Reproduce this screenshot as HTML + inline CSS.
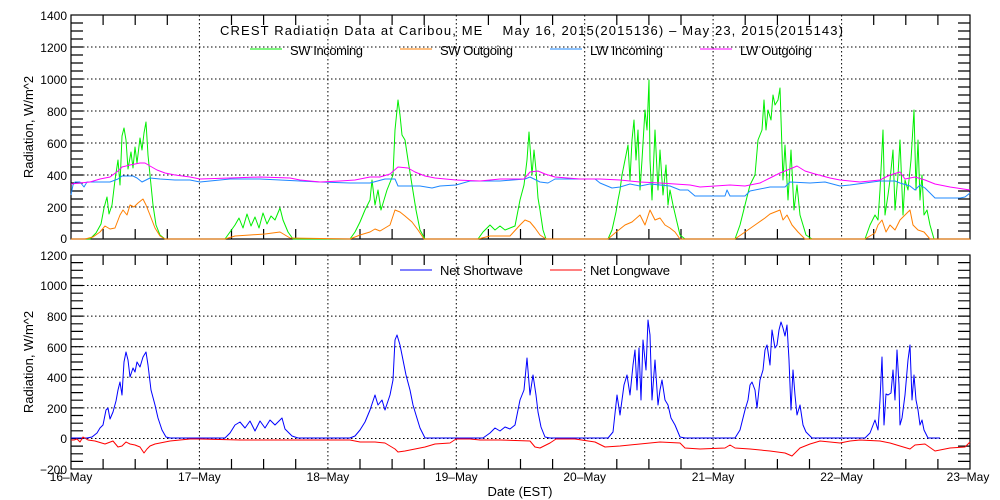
<!DOCTYPE html>
<html><head><meta charset="utf-8"><style>
html,body{margin:0;padding:0;background:#fff;}
svg{display:block;font-family:"Liberation Sans",sans-serif;}
</style></head><body>
<svg width="1000" height="500" xmlns="http://www.w3.org/2000/svg">
<rect width="1000" height="500" fill="#fff"/>
<g stroke="#000" stroke-width="1" fill="none" stroke-dasharray="1.5 2.5">
<path d="M71 207H970M71 175H970M71 143H970M71 111H970M71 79H970M71 47H970"/>
<path d="M71 438.5H970M71 407.9H970M71 377.3H970M71 346.7H970M71 316.1H970M71 285.5H970"/>
<path d="M199.4 15V239M327.9 15V239M456.3 15V239M584.7 15V239M713.1 15V239M841.6 15V239"/>
<path d="M199.4 255V469M327.9 255V469M456.3 255V469M584.7 255V469M713.1 255V469M841.6 255V469"/>
</g>
<g stroke="#000" stroke-width="1.2" fill="none">
<rect x="71" y="15" width="899" height="224"/>
<rect x="71" y="255" width="899" height="214"/>
<path d="M71 23h12M71 31h12M71 39h12M71 47h12M71 55h12M71 63h12M71 71h12M71 79h12M71 87h12M71 95h12M71 103h12M71 111h12M71 119h12M71 127h12M71 135h12M71 143h12M71 151h12M71 159h12M71 167h12M71 175h12M71 183h12M71 191h12M71 199h12M71 207h12M71 215h12M71 223h12M71 231h12"/>
<path d="M958 23h12M958 31h12M958 39h12M958 47h12M958 55h12M958 63h12M958 71h12M958 79h12M958 87h12M958 95h12M958 103h12M958 111h12M958 119h12M958 127h12M958 135h12M958 143h12M958 151h12M958 159h12M958 167h12M958 175h12M958 183h12M958 191h12M958 199h12M958 207h12M958 215h12M958 223h12M958 231h12"/>
<path d="M71 262.6h12M71 270.3h12M71 277.9h12M71 285.5h12M71 293.2h12M71 300.8h12M71 308.5h12M71 316.1h12M71 323.8h12M71 331.4h12M71 339.1h12M71 346.7h12M71 354.3h12M71 362h12M71 369.6h12M71 377.3h12M71 384.9h12M71 392.6h12M71 400.2h12M71 407.9h12M71 415.5h12M71 423.2h12M71 430.8h12M71 438.5h12M71 446.1h12M71 453.8h12M71 461.4h12"/>
<path d="M958 262.6h12M958 270.3h12M958 277.9h12M958 285.5h12M958 293.2h12M958 300.8h12M958 308.5h12M958 316.1h12M958 323.8h12M958 331.4h12M958 339.1h12M958 346.7h12M958 354.3h12M958 362h12M958 369.6h12M958 377.3h12M958 384.9h12M958 392.6h12M958 400.2h12M958 407.9h12M958 415.5h12M958 423.2h12M958 430.8h12M958 438.5h12M958 446.1h12M958 453.8h12M958 461.4h12"/>
<path d="M103.1 239v-10M135.2 239v-10M167.3 239v-10M231.5 239v-10M263.6 239v-10M295.7 239v-10M360 239v-10M392.1 239v-10M424.2 239v-10M488.4 239v-10M520.5 239v-10M552.6 239v-10M616.8 239v-10M648.9 239v-10M681 239v-10M745.2 239v-10M777.4 239v-10M809.5 239v-10M873.7 239v-10M905.8 239v-10M937.9 239v-10"/>
<path d="M103.1 15v10M135.2 15v10M167.3 15v10M231.5 15v10M263.6 15v10M295.7 15v10M360 15v10M392.1 15v10M424.2 15v10M488.4 15v10M520.5 15v10M552.6 15v10M616.8 15v10M648.9 15v10M681 15v10M745.2 15v10M777.4 15v10M809.5 15v10M873.7 15v10M905.8 15v10M937.9 15v10"/>
<path d="M103.1 469v-10M135.2 469v-10M167.3 469v-10M231.5 469v-10M263.6 469v-10M295.7 469v-10M360 469v-10M392.1 469v-10M424.2 469v-10M488.4 469v-10M520.5 469v-10M552.6 469v-10M616.8 469v-10M648.9 469v-10M681 469v-10M745.2 469v-10M777.4 469v-10M809.5 469v-10M873.7 469v-10M905.8 469v-10M937.9 469v-10"/>
<path d="M103.1 255v10M135.2 255v10M167.3 255v10M231.5 255v10M263.6 255v10M295.7 255v10M360 255v10M392.1 255v10M424.2 255v10M488.4 255v10M520.5 255v10M552.6 255v10M616.8 255v10M648.9 255v10M681 255v10M745.2 255v10M777.4 255v10M809.5 255v10M873.7 255v10M905.8 255v10M937.9 255v10"/>
</g>
<g fill="none" stroke-width="1" stroke-linejoin="round">
<polyline stroke="#00ee00" points="71,239 90,239 96,233 101,224 104,208 107,197 109,214 112,205 115,180 118,160 120,185 122,136 124,128 126,140 128,169 131,152 133,168 135,147 137,163 140,138 142,150 144,133 146,122 148,155 150,175 153,205 156,225 160,235 165,239 225,239 230,232 235,225 239,218 243,228 247,214 251,226 255,217 259,228 263,213 267,224 271,216 275,220 280,208 283,220 288,232 293,239 350,239 355,232 360,222 365,210 370,200 372,180 375,205 378,190 381,210 384,200 387,190 393,175 395,130 398,100 400,115 402,135 405,140 408,160 412,185 416,210 420,230 425,239 478,239 483,232 490,225 495,230 500,226 505,230 510,228 515,226 520,200 524,185 527,160 529,132 532,175 534,150 536,170 538,198 540,210 543,230 546,239 608,239 612,230 616,212 618,200 620,190 622,175 625,160 628,145 630,180 632,140 634,120 636,160 638,130 640,190 642,160 645,110 647,130 649,80 650,160 652,200 655,130 658,190 660,150 663,195 666,165 668,205 670,190 673,205 676,218 680,235 685,239 735,239 740,225 745,205 750,185 755,175 758,140 762,130 764,100 766,130 768,110 771,120 773,95 775,105 778,100 780,88 783,180 785,145 788,200 791,150 794,210 797,185 800,215 803,225 806,235 812,239 865,239 870,225 875,215 878,220 880,190 883,130 885,215 888,195 890,180 893,150 895,210 898,175 900,140 903,215 905,180 908,190 911,160 914,110 916,190 918,140 920,200 922,175 924,215 927,210 930,225 934,239 970,239"/>
<polyline stroke="#ff7f00" points="71,239 85,239 93,237 100,232 105,226 110,229 115,228 120,215 123,210 127,215 130,205 134,207 138,203 143,199 146,205 150,215 155,228 160,236 165,239 225,239 235,236 250,235 265,234 280,232 290,238 350,239 360,235 370,232 375,229 380,231 385,228 390,225 395,210 400,212 405,216 412,222 418,230 424,239 478,239 490,236 510,236 520,225 525,220 530,222 535,228 540,235 546,239 608,239 615,233 625,225 632,222 640,215 645,225 650,210 655,220 660,218 665,225 670,228 675,232 680,239 735,239 745,232 755,225 765,218 770,214 775,212 780,210 783,220 787,215 792,225 798,232 805,239 865,239 870,236 875,233 878,225 882,220 886,232 890,225 895,230 900,220 905,215 910,210 913,225 918,230 924,232 930,239 970,239"/>
<polyline stroke="#1e88ff" points="71,195 73,185 75,182 80,182 84,187 87,182 100,182 110,182 118,179 122,176 133,176 137,178 142,182 150,178 160,179 175,180 190,180 200,182 210,181 230,179 260,179 300,181 320,182 350,183 370,183 385,179 395,179 398,186 410,186 420,186 432,188 440,186 456,185 470,181 500,181 525,179 530,177 540,182 548,183 555,179 570,179 580,179 595,179 600,183 612,188 620,187 630,184 640,186 650,184 660,185 670,186 680,190 688,190 695,196 725,196 727,190 730,196 745,196 750,191 770,187 785,187 790,182 810,183 825,182 840,186 850,185 865,183 880,181 895,181 900,183 910,186 915,190 920,185 925,188 935,198 960,198 965,197 970,193"/>
<polyline stroke="#ff00ff" points="71,184 80,183 90,182 100,179 110,177 118,171 122,167 130,165 140,163 145,163 150,166 157,170 165,173 175,175 190,177 200,179 230,178 260,177 290,178 300,180 320,182 340,181 355,180 370,177 380,177 390,174 398,167 408,168 415,172 425,176 435,178 456,180 480,181 500,179 524,179 530,172 538,171 545,174 555,177 580,179 600,179 620,180 640,182 660,183 690,185 700,187 730,185 745,186 760,183 770,178 780,173 790,169 797,166 805,171 815,174 830,178 840,180 860,182 880,180 890,175 900,172 905,179 915,177 925,180 935,184 950,187 970,190"/>
<polyline stroke="#0000ff" points="71,438 87,438 92,437 97,433 100,428 103,425 106,410 108,408 110,419 113,412 116,401 118,390 120,382 122,395 124,362 126,352 128,360 130,377 133,368 135,372 137,362 140,367 143,357 146,352 148,365 151,390 155,405 158,418 162,430 166,437 170,438 225,438 230,433 235,425 240,422 245,428 250,421 255,431 260,421 265,428 270,420 275,425 282,418 285,429 292,436 298,438 350,438 355,436 360,430 365,422 370,410 375,395 378,405 382,400 385,410 390,395 393,380 395,340 397,335 400,345 403,360 406,375 410,390 413,405 416,415 420,428 425,438 483,438 490,433 495,428 500,431 505,427 510,429 515,425 520,400 524,390 527,358 530,395 533,375 536,395 538,412 541,427 545,437 550,438 608,438 613,432 617,395 620,415 624,385 627,375 630,395 633,365 635,350 637,390 639,348 641,400 643,340 646,370 648,320 650,335 652,400 655,360 658,405 660,390 662,380 665,400 668,405 671,418 675,425 680,437 685,438 735,438 740,430 745,410 748,400 750,385 752,382 755,390 757,408 760,380 763,370 765,350 767,345 770,365 772,330 775,348 777,345 779,330 781,322 783,328 785,336 787,325 789,360 791,410 793,370 795,395 797,415 800,405 803,425 806,432 812,438 865,438 870,433 875,420 878,430 880,400 882,357 884,425 886,394 888,395 891,393 893,370 895,400 897,350 899,385 900,425 902,418 905,395 908,360 910,345 912,400 914,375 916,400 918,410 920,425 922,420 924,430 928,438 940,438"/>
<polyline stroke="#ff0000" points="71,440 74,440 77,439 80,442 83,437 88,440 95,441 105,444 113,441 118,447 122,446 126,442 130,444 135,445 140,447 144,453 147,449 150,446 155,444 160,443 170,441 180,440 190,439 200,439 240,440 280,440 320,440 350,440 360,442 375,442 385,443 390,446 395,449 398,452 405,451 415,449 425,447 435,444 450,443 456,439 470,439 480,440 500,440 530,441 535,447 540,448 550,443 556,439 575,439 595,442 605,447 620,446 640,444 660,442 680,443 685,448 700,449 725,448 730,445 735,448 750,449 770,451 785,453 792,456 800,448 810,444 820,441 840,443 850,441 860,440 880,441 890,443 900,446 910,449 915,445 925,444 935,451 950,448 965,447 970,442"/>
<path stroke="#00ee00" d="M250 49h32"/>
<path stroke="#ff7f00" d="M400 49h32"/>
<path stroke="#1e88ff" d="M550 49h32"/>
<path stroke="#ff00ff" d="M700 49h32"/>
<path stroke="#0000ff" d="M400 270h32"/>
<path stroke="#ff0000" d="M550 270h32"/>
</g>
<g font-size="13" fill="#000">
<text x="220" y="35" textLength="623" lengthAdjust="spacing" xml:space="preserve" style="white-space:pre">CREST Radiation Data at Caribou, ME    May 16, 2015(2015136) – May 23, 2015(2015143)</text>
<text x="290" y="55" textLength="73" lengthAdjust="spacing">SW Incoming</text>
<text x="440" y="55" textLength="73" lengthAdjust="spacing">SW Outgoing</text>
<text x="590" y="55" textLength="73" lengthAdjust="spacing">LW Incoming</text>
<text x="740" y="55" textLength="72" lengthAdjust="spacing">LW Outgoing</text>
<text x="440" y="275" textLength="83" lengthAdjust="spacing">Net Shortwave</text>
<text x="590" y="275" textLength="80" lengthAdjust="spacing">Net Longwave</text>
</g>
<g font-size="12" fill="#000" text-anchor="end">
<text x="67" y="20">1400</text><text x="67" y="52">1200</text><text x="67" y="84">1000</text>
<text x="67" y="116">800</text><text x="67" y="148">600</text><text x="67" y="180">400</text>
<text x="67" y="212">200</text><text x="67" y="243">0</text>
<text x="67" y="260">1200</text><text x="67" y="290">1000</text><text x="67" y="321">800</text>
<text x="67" y="352">600</text><text x="67" y="382">400</text><text x="67" y="413">200</text>
<text x="67" y="443">0</text><text x="67" y="474">−200</text>
</g>
<g font-size="12" fill="#000" text-anchor="middle">
<text x="71" y="481">16–May</text><text x="199.4" y="481">17–May</text><text x="327.9" y="481">18–May</text>
<text x="456.3" y="481">19–May</text><text x="584.7" y="481">20–May</text><text x="713.1" y="481">21–May</text>
<text x="841.6" y="481">22–May</text><text x="968" y="481">23–May</text>
<text x="520" y="496" font-size="13">Date (EST)</text>
<text transform="translate(33,127) rotate(-90)" font-size="13">Radiation, W/m^2</text>
<text transform="translate(33,362) rotate(-90)" font-size="13">Radiation, W/m^2</text>
</g>
</svg>
</body></html>
